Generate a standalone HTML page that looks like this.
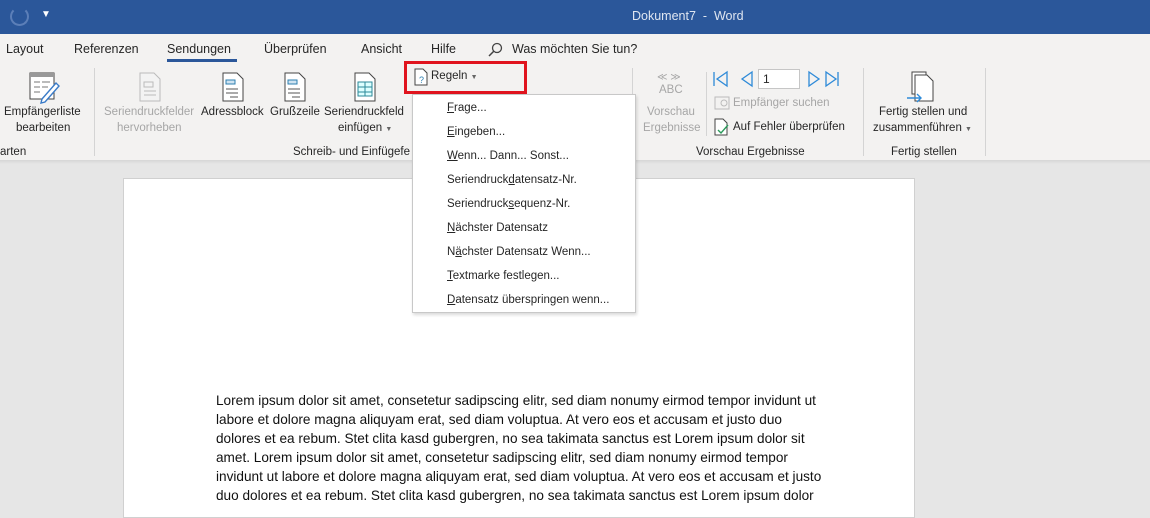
<!DOCTYPE html>
<html><head><meta charset="utf-8"><style>
*{margin:0;padding:0;box-sizing:border-box}
body{width:1150px;height:508px;overflow:hidden;background:#e6e6e6;font-family:"Liberation Sans",sans-serif;position:relative;color:#262626}
.a{position:absolute;white-space:nowrap}
.t{font-size:12.5px}
.s{font-size:11.5px}
.g{color:#a6a6a6}
.vs{position:absolute;width:1px;background:#d4d4d4}
.mi{position:absolute;left:34px;font-size:11.5px;color:#262626}
.ln{position:absolute;left:216px;font-size:13.6px;white-space:nowrap;color:#111}
</style></head><body>
<div class="a" style="left:0;top:0;width:1150px;height:34px;background:#2b579a"></div>
<div class="a" style="left:10px;top:7px;width:19px;height:19px;border:2px solid #5c7fb8;border-radius:50%;border-top-color:transparent"></div>
<div class="a" style="left:41px;top:9px;color:#fff;font-size:10px">&#9660;</div>
<div class="a" style="left:632px;top:9px;color:#dfe6f1;font-size:12.5px">Dokument7 &nbsp;-&nbsp; Word</div>
<div class="a" style="left:0;top:34px;width:1150px;height:126px;background:#f3f2f1"></div>
<div class="a" style="left:0;top:160px;width:1150px;height:4px;background:linear-gradient(#d6d6d6,#e6e6e6)"></div>
<div class="a t" style="left:6px;top:42px">Layout</div>
<div class="a t" style="left:74px;top:42px">Referenzen</div>
<div class="a t" style="left:167px;top:42px">Sendungen</div>
<div class="a" style="left:167px;top:59px;width:70px;height:3px;background:#2b579a"></div>
<div class="a t" style="left:264px;top:42px">Überprüfen</div>
<div class="a t" style="left:361px;top:42px">Ansicht</div>
<div class="a t" style="left:431px;top:42px">Hilfe</div>
<svg class="a" style="left:487px;top:42px" width="16" height="16"><circle cx="10" cy="6" r="4.5" fill="none" stroke="#444" stroke-width="1.3"/><line x1="7" y1="9" x2="2" y2="14" stroke="#444" stroke-width="1.5"/></svg>
<div class="a t" style="left:512px;top:42px">Was möchten Sie tun?</div>
<svg class="a" style="left:28px;top:72px" width="34" height="32"><rect x="2" y="1" width="24" height="26" fill="#fff" stroke="#444"/><rect x="2" y="1" width="24" height="4" fill="#999"/><path d="M6 10h6M6 15h6M6 20h6M14 10h8M14 15h6" stroke="#777"/><path d="M14 27l14-16 3 3-14 16-4 1z" fill="#fff" stroke="#3a7bc8" stroke-width="1.4"/></svg>
<div class="a s" style="left:4px;top:106px">Empfängerliste</div>
<div class="a s" style="left:16px;top:122px">bearbeiten</div>
<div class="a s" style="left:0;top:146px">arten</div>
<div class="vs" style="left:94px;top:68px;height:88px"></div>
<svg class="a" style="left:138px;top:72px" width="24" height="30"><path d="M2 1h14l6 6v22H2z" fill="#f3f3f3" stroke="#bbb"/><path d="M6 10h9v5H6zM6 19h12M6 23h12" stroke="#bbb" fill="none"/></svg>
<div class="a s g" style="left:104px;top:106px">Seriendruckfelder</div>
<div class="a s g" style="left:117px;top:122px">hervorheben</div>
<svg class="a" style="left:221px;top:72px" width="24" height="30"><path d="M2 1h14l6 6v22H2z" fill="#fff" stroke="#444"/><path d="M5 8h9v4H5z" fill="#cfe3f1" stroke="#2c7fb0"/><path d="M5 17h12M5 21h12M9 25h8" stroke="#555"/></svg>
<div class="a s" style="left:201px;top:106px">Adressblock</div>
<svg class="a" style="left:283px;top:72px" width="24" height="30"><path d="M2 1h14l6 6v22H2z" fill="#fff" stroke="#444"/><path d="M5 8h9v4H5z" fill="#cfe3f1" stroke="#2c7fb0"/><path d="M5 17h12M5 21h12M9 25h8" stroke="#555"/></svg>
<div class="a s" style="left:270px;top:106px">Grußzeile</div>
<svg class="a" style="left:353px;top:72px" width="24" height="30"><path d="M2 1h14l6 6v22H2z" fill="#fff" stroke="#444"/><path d="M5 10h14v14H5zM5 15h14M5 20h14M12 10v14" stroke="#2c8a9a" fill="#dff" /></svg>
<div class="a s" style="left:324px;top:106px">Seriendruckfeld</div>
<div class="a s" style="left:338px;top:122px">einfügen <span style="font-size:7px;color:#666">▼</span></div>
<div class="a s" style="left:293px;top:146px">Schreib- und Einfügefe</div>
<svg class="a" style="left:414px;top:68px" width="14" height="18"><path d="M1 1h8l4 4v12H1z" fill="#fff" stroke="#444"/><text x="5" y="15" font-size="9" fill="#2c7fb0" font-family="Liberation Sans">?</text></svg>
<div class="a s" style="left:431px;top:70px">Regeln <span style="font-size:7px;color:#666">▼</span></div>
<div class="a" style="left:404px;top:61px;width:123px;height:33px;border:3px solid #e0141e"></div>
<div class="vs" style="left:632px;top:68px;height:88px"></div>
<div class="a s g" style="left:657px;top:72px;font-size:10px">≪ ≫</div>
<div class="a s g" style="left:659px;top:84px">ABC</div>
<div class="a s g" style="left:647px;top:106px">Vorschau</div>
<div class="a s g" style="left:643px;top:122px">Ergebnisse</div>
<div class="vs" style="left:706px;top:72px;height:64px"></div>
<svg class="a" style="left:712px;top:70px" width="150" height="18"><path d="M2 2v14M15 2L5 9l10 7z" fill="none" stroke="#2e8ad8" stroke-width="1.3"/><path d="M40 2l-10 7 10 7z" fill="none" stroke="#2e8ad8" stroke-width="1.3"/><path d="M97 2l10 7-10 7z" fill="none" stroke="#2e8ad8" stroke-width="1.3"/><path d="M114 2l10 7-10 7zM126 2v14" fill="none" stroke="#2e8ad8" stroke-width="1.3"/></svg>
<div class="a" style="left:758px;top:69px;width:42px;height:20px;background:#fff;border:1px solid #c6c6c6;font-size:12px;padding:2px 4px">1</div>
<svg class="a" style="left:714px;top:96px" width="16" height="14"><rect x="1" y="1" width="14" height="12" fill="none" stroke="#bbb"/><circle cx="10" cy="7" r="3" fill="none" stroke="#bbb"/></svg>
<div class="a s g" style="left:733px;top:97px">Empfänger suchen</div>
<svg class="a" style="left:714px;top:118px" width="16" height="18"><path d="M1 1h8l4 4v12H1z" fill="#fff" stroke="#444"/><path d="M4 12l3 3 7-8" stroke="#2a9a5a" fill="none" stroke-width="1.4"/></svg>
<div class="a s" style="left:733px;top:121px">Auf Fehler überprüfen</div>
<div class="a s" style="left:696px;top:146px">Vorschau Ergebnisse</div>
<div class="vs" style="left:863px;top:68px;height:88px"></div>
<svg class="a" style="left:906px;top:71px" width="30" height="34"><path d="M6 1h14v22H6z" fill="#fff" stroke="#444"/><path d="M9 4h12l6 6v20H9z" fill="#fff" stroke="#444"/><path d="M1 27h14M11 23l4 4-4 4" stroke="#2e8ad8" fill="none" stroke-width="1.4"/></svg>
<div class="a s" style="left:879px;top:106px">Fertig stellen und</div>
<div class="a s" style="left:873px;top:122px">zusammenführen <span style="font-size:7px;color:#666">▼</span></div>
<div class="a s" style="left:891px;top:146px">Fertig stellen</div>
<div class="vs" style="left:985px;top:68px;height:88px"></div>
<div class="a" style="left:123px;top:178px;width:792px;height:340px;background:#fff;border:1px solid #d0d0d0"></div>
<div class="ln" style="top:393px">Lorem ipsum dolor sit amet, consetetur sadipscing elitr, sed diam nonumy eirmod tempor invidunt ut</div>
<div class="ln" style="top:412px">labore et dolore magna aliquyam erat, sed diam voluptua. At vero eos et accusam et justo duo</div>
<div class="ln" style="top:431px">dolores et ea rebum. Stet clita kasd gubergren, no sea takimata sanctus est Lorem ipsum dolor sit</div>
<div class="ln" style="top:450px">amet. Lorem ipsum dolor sit amet, consetetur sadipscing elitr, sed diam nonumy eirmod tempor</div>
<div class="ln" style="top:469px">invidunt ut labore et dolore magna aliquyam erat, sed diam voluptua. At vero eos et accusam et justo</div>
<div class="ln" style="top:488px">duo dolores et ea rebum. Stet clita kasd gubergren, no sea takimata sanctus est Lorem ipsum dolor</div>
<div class="a" style="left:412px;top:94px;width:224px;height:219px;background:#fff;border:1px solid #c8c8c8;box-shadow:1px 2px 3px rgba(0,0,0,.15)">
<div class="mi" style="top:7px"><u>F</u>rage...</div>
<div class="mi" style="top:31px"><u>E</u>ingeben...</div>
<div class="mi" style="top:55px"><u>W</u>enn... Dann... Sonst...</div>
<div class="mi" style="top:79px">Seriendruck<u>d</u>atensatz-Nr.</div>
<div class="mi" style="top:103px">Seriendruck<u>s</u>equenz-Nr.</div>
<div class="mi" style="top:127px"><u>N</u>ächster Datensatz</div>
<div class="mi" style="top:151px">N<u>ä</u>chster Datensatz Wenn...</div>
<div class="mi" style="top:175px"><u>T</u>extmarke festlegen...</div>
<div class="mi" style="top:199px"><u>D</u>atensatz überspringen wenn...</div>
</div>
</body></html>
